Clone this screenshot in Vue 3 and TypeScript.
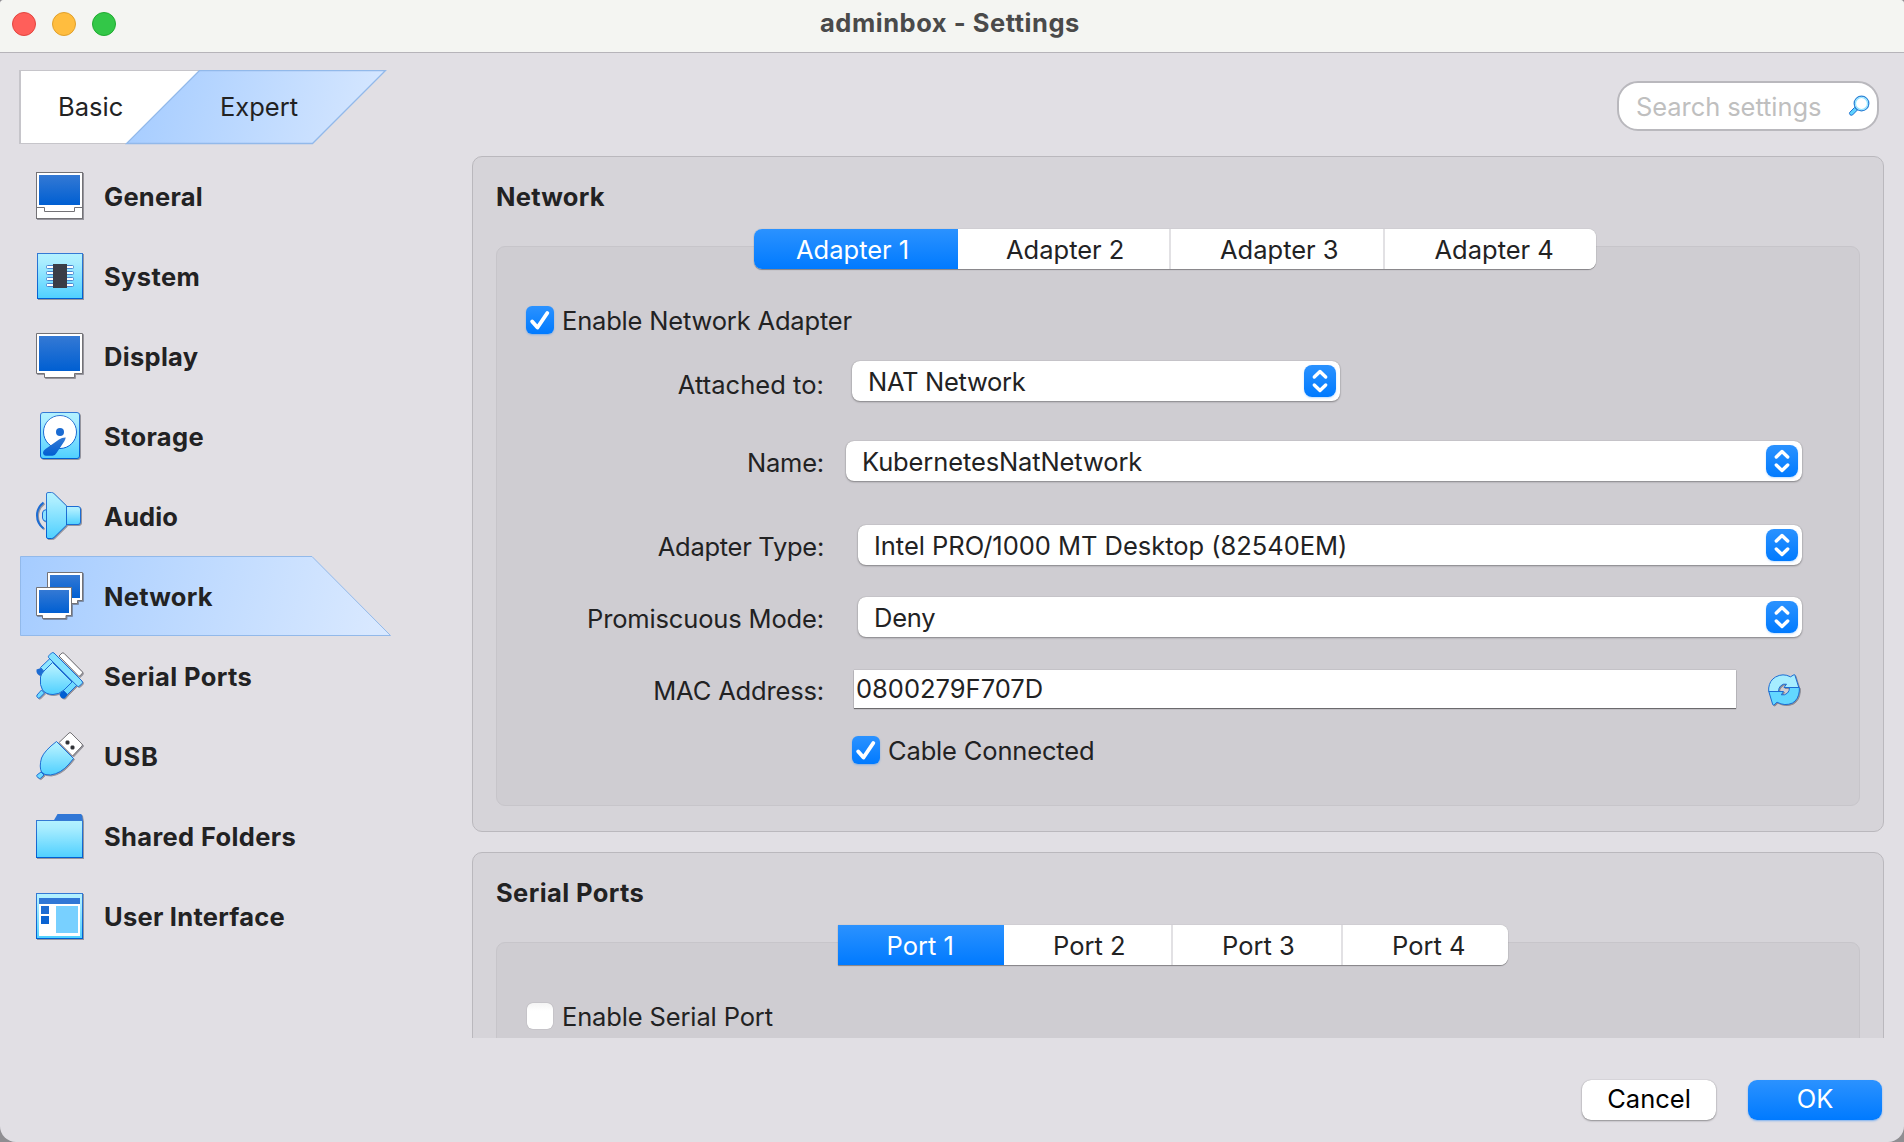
<script setup lang="ts">
import { ref } from 'vue'

interface NavItem {
  id: string
  label: string
  spacing: number
}

const navItems: NavItem[] = [
  { id: 'general', label: 'General', spacing: 0.25 },
  { id: 'system', label: 'System', spacing: 0.4 },
  { id: 'display', label: 'Display', spacing: 0.3 },
  { id: 'storage', label: 'Storage', spacing: 0.35 },
  { id: 'audio', label: 'Audio', spacing: 0.1 },
  { id: 'network', label: 'Network', spacing: 0.26 },
  { id: 'serial', label: 'Serial Ports', spacing: 0.4 },
  { id: 'usb', label: 'USB', spacing: 0.8 },
  { id: 'folders', label: 'Shared Folders', spacing: 0.35 },
  { id: 'ui', label: 'User Interface', spacing: 0.26 },
]

const current = ref('network')
const adapters = ['Adapter 1', 'Adapter 2', 'Adapter 3', 'Adapter 4']
const adapter = ref(0)
const ports = ['Port 1', 'Port 2', 'Port 3', 'Port 4']
const port = ref(0)
</script>

<template>
  <div class="window">
    <svg class="defs" width="0" height="0" aria-hidden="true">
      <defs>
        <linearGradient id="screen" x1="0" y1="0" x2="0" y2="1">
          <stop offset="0" stop-color="#3479d4" />
          <stop offset="1" stop-color="#005fd2" />
        </linearGradient>
        <linearGradient id="cyan" x1="0" y1="0" x2="0" y2="1">
          <stop offset="0" stop-color="#b4f2ff" />
          <stop offset=".2" stop-color="#a9edff" />
          <stop offset="1" stop-color="#4fd0ff" />
        </linearGradient>
        <linearGradient id="pale" gradientUnits="userSpaceOnUse" x1="0" y1="0" x2="350" y2="80">
          <stop offset="0" stop-color="#a5ccff" />
          <stop offset="1" stop-color="#d8e8ff" />
        </linearGradient>
        <linearGradient id="pale-mode" gradientUnits="userSpaceOnUse" x1="107" y1="20" x2="366" y2="80">
          <stop offset="0" stop-color="#a5ccff" />
          <stop offset="1" stop-color="#d8e8ff" />
        </linearGradient>
      </defs>
    </svg>

    <header class="titlebar">
      <div class="lights">
        <span class="light red"></span>
        <span class="light yellow"></span>
        <span class="light green"></span>
      </div>
      <h1 class="title">adminbox - Settings</h1>
    </header>

    <div class="toolbar">
      <div class="modes">
        <svg class="modes-shape" width="370" height="76" viewBox="0 0 370 76">
          <path d="M1 .5H182L108 73.5H1z" fill="#fff" stroke="#c6c5ca" />
          <path d="M1 0V74" stroke="#c6c5ca" stroke-width="2" />
          <path d="M180.500 .5H366.500L293.500 73.500H107.500z" fill="url(#pale-mode)" stroke="#92b9ea" stroke-width="1.300" />
        </svg>
        <span class="mode basic">Basic</span>
        <span class="mode expert">Expert</span>
      </div>
      <div class="search">
        <span class="placeholder">Search settings</span>
        <svg width="24" height="24" viewBox="0 0 24 24">
          <path d="M7.500 13.500L2.800 18.300Q2 19.500 3 20.700Q4.300 21.800 5.600 20.900L10.400 16z" fill="#5fd3ff" stroke="#1f6fd0" />
          <circle cx="14.500" cy="9.500" r="7.300" fill="#eefaff" stroke="#2f86d8" stroke-width="1.300" />
          <circle cx="14.500" cy="9.500" r="6" fill="#fff" stroke="#8fe2ff" stroke-width="1.200" />
        </svg>
      </div>
    </div>

    <div class="body">
      <nav class="nav">
        <div
          v-for="item in navItems"
          :key="item.id"
          class="nav-item"
          :class="{ active: item.id === current }"
          @click="current = item.id"
        >
          <svg v-if="item.id === current" class="nav-bg" width="373" height="80" viewBox="0 0 373 80">
            <path d="M.5 .5H292L370.500 79.500H.5z" fill="url(#pale)" stroke="#92b9ea" />
          </svg>
          <svg class="icon" width="48" height="48" viewBox="0 0 48 48">
            <g v-if="item.id === 'general'">
              <rect x=".5" y=".5" width="46" height="46" fill="#fff" stroke="#737276" />
              <rect x="3" y="3" width="41" height="30" fill="url(#screen)" />
              <path d="M.5 35.500H8.500V39.500H38.500V35.500H46.500" fill="none" stroke="#737276" />
            </g>
            <g v-else-if="item.id === 'system'">
              <rect x="1.500" y="1.500" width="45" height="45" fill="url(#cyan)" stroke="url(#screen)" />
              <rect v-for="n in 4" :key="n" x="10.500" :y="7.5 + n * 6" width="27" height="3" rx="1" fill="#fff" stroke="#4b86cf" />
              <rect x="17" y="12" width="14" height="24" fill="#3a3d47" />
            </g>
            <g v-else-if="item.id === 'display'">
              <path d="M.5 1.500H46.500V41.500H38.500V45.500H8.500V41.500H.5z" fill="#fff" stroke="#737276" />
              <rect x="3" y="4" width="41" height="35" fill="url(#screen)" />
            </g>
            <g v-else-if="item.id === 'storage'">
              <rect x="4.500" y=".5" width="39" height="46" rx="2.500" fill="url(#cyan)" stroke="url(#screen)" />
              <circle cx="24" cy="20" r="16.500" fill="#fff" stroke="url(#screen)" />
              <circle cx="24" cy="20" r="4" fill="#1a6bd2" />
              <path d="M29.700 25.600Q29.500 27.500 28.500 29L20.500 41Q19 43.800 16.500 43.800H10Q7 43.500 7 40.500Q7 38.500 9.500 37L23 27.500Q26 25.500 29.700 25.600z" fill="url(#screen)" />
            </g>
            <g v-else-if="item.id === 'audio'">
              <path d="M7.500 10.500Q1 15.500 1 23.500T7.500 36.500" fill="none" stroke="#1c6cd3" stroke-width="2" />
              <path d="M10.500 17.500Q6.500 18 6.500 21V26Q6.500 29 10.500 29.500z" fill="#8ce2ff" stroke="#1c6cd3" />
              <rect x="28.500" y="14.500" width="16" height="18" rx="2.500" fill="url(#cyan)" stroke="#1c6cd3" />
              <path d="M10.500 2Q10.500 .5 12 .5H15.500Q17 .5 18 1.600L30.500 13.800V33.200L18 45.500Q17 46.500 15.500 46.500H12Q10.500 46.500 10.500 45z" fill="url(#cyan)" stroke="url(#screen)" />
            </g>
            <g v-else-if="item.id === 'network'">
              <path d="M11.500 .5H46.500V28.500H41.500V31.500H17V28.500H11.500z" fill="#fff" stroke="#737276" />
              <rect x="14" y="3" width="30" height="23" fill="url(#screen)" />
              <path d="M.5 15.500H35.500V43.500H30V46.500H6.500V43.500H.5z" fill="#fff" stroke="#737276" />
              <rect x="3" y="18" width="30" height="23" fill="url(#screen)" />
            </g>
            <g v-else-if="item.id === 'serial'">
              <path d="M23 4L26 1Q27 .5 28 1.300L46 19.500Q47 20.500 46 21.800L43 24.500z" fill="#fff" stroke="#737276" />
              <path d="M.5 17.500L5 16L8.500 20.500L6.500 23.500Q4 24.500 1.500 22Q0 20 .5 17.500z" fill="#1c6cd3" />
              <path d="M4.500 15.500L14.500 6L18.500 10.500L8.500 20z" fill="#8ee6ff" stroke="#1c6cd3" />
              <path d="M25 40L28 38.500L32 42.500L29 46Q27 47.300 25 45.500L23.500 43z" fill="#005fd2" />
              <path d="M27.500 38.500L37 28.500L41.500 32.500L31.500 42.500z" fill="#6edaff" stroke="#1c6cd3" />
              <path d="M16.500 10.500L36 30L28 38Q23 42.500 17 42.500Q10 42.500 6.500 38Q3.500 33.500 4.500 25Q5 22 8 19z" fill="url(#cyan)" stroke="#1c6cd3" />
              <path d="M12.500 5.500Q12 4.500 13 3.500L15.500 1Q16.800 0 18 1L46 29Q47 30.500 46 31.500L43.500 34Q42.500 35 41.200 34z" fill="#85e2ff" stroke="#1c6cd3" />
              <path d="M5.500 38L8.500 41L3.500 46Q2.500 46.500 1.500 45.500Q.3 44.500 1 43z" fill="#6edaff" stroke="#1c6cd3" />
            </g>
            <g v-else-if="item.id === 'usb'">
              <path d="M23 10.500L33 1Q34 0 35 1L46 12Q47 13 46 14L36.500 24z" fill="#fff" stroke="#737276" />
              <path d="M31.500 8.500v4M29.500 10.500h4M36.500 13.500v4M34.500 15.500h4" stroke="#2f3035" stroke-width="2.600" />
              <path d="M20.500 9.500L37.500 26.500L33 32Q25 41.500 14.500 43Q8 43.500 5.500 40Q3 35 5.500 26Q8.500 18.500 20.500 9.500z" fill="url(#cyan)" stroke="#1c6cd3" />
              <path d="M5 40L8 43L4.500 46.300Q3.500 47 2.500 46L1 44.500Q.3 43.700 1.200 42.800z" fill="#6edaff" stroke="#1c6cd3" />
            </g>
            <g v-else-if="item.id === 'folders'">
              <path d="M17.500 9L21.500 2H45L46 3L47 9z" fill="#3077d6" />
              <rect x=".5" y="8.500" width="46" height="37" fill="url(#cyan)" stroke="url(#screen)" />
            </g>
            <g v-else>
              <rect x=".5" y="1.500" width="46" height="45" fill="url(#cyan)" stroke="url(#screen)" />
              <rect x="3" y="6" width="41" height="6" fill="#3077d6" />
              <rect x="3" y="12" width="41" height="32" fill="#fff" />
              <rect x="5" y="14" width="8" height="8" fill="#1d6cd3" />
              <rect x="5" y="24" width="8" height="8" fill="#0a63d2" />
              <rect x="20" y="14" width="22" height="27" fill="#78d0ff" />
            </g>
          </svg>
          <span class="nav-label" :style="{ letterSpacing: item.spacing + 'px' }">{{ item.label }}</span>
        </div>
      </nav>

      <main class="pages">
        <section class="panel">
          <h2 class="panel-title">Network</h2>
          <div class="frame network">
            <div class="tabs adapters">
              <button v-for="(name, i) in adapters" :key="name" class="tab" :class="{ on: i === adapter }" @click="adapter = i">{{ name }}</button>
            </div>
            <label class="check-row enable">
              <span class="check checked"><svg width="28" height="28" viewBox="0 0 28 28"><path d="M6.200 15.500L11.500 21.500L21.300 7" /></svg></span>
              <span class="check-text t-enable">Enable Network Adapter</span>
            </label>
            <div class="row attached">
              <span class="label">Attached to:</span>
              <div class="combo"><span class="value t-nat">NAT Network</span><i class="arrows"><svg width="32" height="32" viewBox="0 0 32 32"><path d="M10.300 12L16 6.500L21.700 12M10.300 20L16 25.500L21.700 20" /></svg></i></div>
            </div>
            <div class="row name">
              <span class="label">Name:</span>
              <div class="combo"><span class="value t-kube">KubernetesNatNetwork</span><i class="arrows"><svg width="32" height="32" viewBox="0 0 32 32"><path d="M10.300 12L16 6.500L21.700 12M10.300 20L16 25.500L21.700 20" /></svg></i></div>
            </div>
            <div class="row type">
              <span class="label">Adapter Type:</span>
              <div class="combo"><span class="value t-intel">Intel PRO/1000 MT Desktop (82540EM)</span><i class="arrows"><svg width="32" height="32" viewBox="0 0 32 32"><path d="M10.300 12L16 6.500L21.700 12M10.300 20L16 25.500L21.700 20" /></svg></i></div>
            </div>
            <div class="row promisc">
              <span class="label">Promiscuous Mode:</span>
              <div class="combo"><span class="value t-deny">Deny</span><i class="arrows"><svg width="32" height="32" viewBox="0 0 32 32"><path d="M10.300 12L16 6.500L21.700 12M10.300 20L16 25.500L21.700 20" /></svg></i></div>
            </div>
            <div class="row mac">
              <span class="label">MAC Address:</span>
              <div class="field">0800279F707D</div>
              <svg class="refresh" width="32" height="32" viewBox="0 0 32 32">
                <path d="M.7 17.500V14Q1.500 6.500 7.500 3Q15 -1.200 22.500 2.800L26 .7Q27 .5 27 1.500L30.800 13.500H16L18.500 10.200Q15 9.400 12.500 12Q10.500 14 10.500 17.500z" fill="#a6edff" stroke="#1c6cd3" />
                <path d="M31.300 13.500V17Q30.500 25.500 24.500 29Q17 32.500 9 28.200L6 31Q5 31.300 4.700 30.500L.8 17.500H15.500L13.300 20.800Q17 21.600 19.500 19Q21.500 17 21.500 13.500z" fill="#63d7ff" stroke="#1c6cd3" />
              </svg>
            </div>
            <label class="check-row cable">
              <span class="check checked"><svg width="28" height="28" viewBox="0 0 28 28"><path d="M6.200 15.500L11.500 21.500L21.300 7" /></svg></span>
              <span class="check-text t-cable">Cable Connected</span>
            </label>
          </div>
        </section>

        <section class="panel second">
          <h2 class="panel-title serial-title">Serial Ports</h2>
          <div class="frame serial">
            <div class="tabs ports">
              <button v-for="(name, i) in ports" :key="name" class="tab" :class="{ on: i === port }" @click="port = i">{{ name }}</button>
            </div>
            <label class="check-row enable">
              <span class="check empty"></span>
              <span class="check-text t-serial">Enable Serial Port</span>
            </label>
          </div>
        </section>
      </main>
    </div>

    <footer class="footer">
      <button class="btn cancel">Cancel</button>
      <button class="btn ok">OK</button>
    </footer>
  </div>
</template>

<style>
body {
  margin: 0;
  background: #8f8e92;
}
</style>

<style scoped>
.window {
  width: 1904px;
  height: 1142px;
  box-sizing: border-box;
  display: flex;
  flex-direction: column;
  overflow: hidden;
  background: #e1dfe4;
  border-radius: 4px 4px 16px 16px;
  font-family: Inter, "Liberation Sans", sans-serif;
  font-size: 25.5px;
  line-height: 32px;
  letter-spacing: 0;
  color: #222223;
  white-space: nowrap;
}
.defs { position: absolute; }
svg { display: block; flex: none; }
button {
  font: inherit;
  letter-spacing: inherit;
  color: inherit;
  border: 0;
  margin: 0;
  padding: 0;
}

.titlebar {
  flex: none;
  display: flex;
  height: 52px;
  background: #f4f5f2;
  border-bottom: 1px solid #b6b4b9;
}
.lights {
  display: flex;
  gap: 16px;
  padding: 12px 0 0 12px;
  width: 808px;
  box-sizing: border-box;
}
.light {
  width: 24px;
  height: 24px;
  box-sizing: border-box;
  border-radius: 50%;
  border: 1px solid;
}
.red { background: #ff5f5a; border-color: #e2453f; }
.yellow { background: #ffbd3f; border-color: #e0a02c; }
.green { background: #33c748; border-color: #20ab31; }
.title {
  margin: 7px 0 0 12px;
  font-size: 25.5px;
  font-weight: 700;
  letter-spacing: 0.53px;
  color: #4a4a4a;
}

.toolbar {
  flex: none;
  display: flex;
  justify-content: space-between;
  height: 103px;
  padding: 17px 25px 0 19px;
  box-sizing: border-box;
}
.modes {
  position: relative;
  display: flex;
  width: 370px;
  height: 76px;
}
.modes-shape { position: absolute; left: 0; top: 0; }
.mode { position: relative; padding-top: 21px; }
.basic { width: 162px; padding-left: 39px; }
.basic, .expert { box-sizing: border-box; }
.expert { padding-left: 39px; }
.search {
  display: flex;
  justify-content: space-between;
  align-items: center;
  width: 262px;
  height: 50px;
  margin-top: 11px;
  padding: 0 6px 0 17px;
  box-sizing: border-box;
  border: 2px solid #b9b8bd;
  border-radius: 21px;
  background: #fff;
}
.placeholder { color: #bfbfbf; padding-top: 2px; letter-spacing: -0.08px; }

.body {
  flex: none;
  display: flex;
  height: 882px;
}
.nav {
  flex: none;
  width: 452px;
  padding-left: 20px;
}
.nav-item {
  position: relative;
  display: flex;
  height: 80px;
  width: 373px;
}
.nav-bg { position: absolute; left: 0; top: 0; }
.icon {
  position: relative;
  margin: 16px 0 0 16px;
  filter: drop-shadow(1px 1px 0.300px rgba(60, 60, 70, 0.450));
}
.nav-label {
  position: relative;
  margin: 25px 0 0 20px;
  font-weight: 700;
}

.pages {
  width: 1412px;
  height: 882px;
  overflow: hidden;
}
.panel {
  box-sizing: border-box;
  height: 676px;
  padding: 24px 23px 0;
  border: 1px solid #bab8bd;
  border-radius: 10px;
  background: #d6d4d9;
}
.second { margin-top: 20px; }
.panel-title {
  margin: 0;
  height: 65px;
  font-size: 25.5px;
  font-weight: 700;
  letter-spacing: 0.26px;
}
.serial-title { letter-spacing: 0.4px; }
.frame {
  display: flex;
  flex-direction: column;
  height: 560px;
  box-sizing: border-box;
  border: 1px solid #c7c5ca;
  border-radius: 9px;
  background: #cfcdd2;
}
.tabs {
  display: flex;
  height: 40px;
  margin-top: -18px;
  border-radius: 8px;
  background: #fff;
  box-shadow: 0 1px 1px rgba(0, 0, 0, 0.350), 0 0 1px rgba(0, 0, 0, 0.300);
  overflow: hidden;
}
.adapters { width: 842px; margin-left: 257px; }
.ports { width: 670px; margin-left: 341px; border-radius: 0 8px 8px 0; }
.tab {
  box-sizing: border-box;
  text-align: left;
  padding-top: 2px;
  background: #fff;
  border-right: 2px solid #e2e1e4;
}
.tab:last-child { border-right: 0; }
.tab.on {
  color: #fff;
  border-right: 0;
  background: linear-gradient(#2b92ff, #007aff);
}
.adapters .tab:nth-child(1) { width: 204px; padding-left: 42px; }
.adapters .tab:nth-child(2) { width: 213px; padding-left: 48px; }
.adapters .tab:nth-child(3) { width: 214px; padding-left: 49px; }
.adapters .tab:nth-child(4) { width: 211px; padding-left: 49.5px; }
.ports .tab:nth-child(1) { width: 166px; padding-left: 48.5px; }
.ports .tab:nth-child(2) { width: 169px; padding-left: 49px; }
.ports .tab:nth-child(3) { width: 170px; padding-left: 49px; }
.ports .tab:nth-child(4) { width: 165px; padding-left: 49px; }

.check-row {
  display: flex;
  align-items: center;
  gap: 8px;
  height: 28px;
}
.check-text { padding-top: 2px; }
.t-enable { letter-spacing: -0.18px; }
.t-cable { letter-spacing: -0.16px; }
.t-serial { letter-spacing: -0.14px; }
.enable { margin: 37px 0 0 29px; }
.check {
  width: 28px;
  height: 28px;
  border-radius: 6px;
  box-sizing: border-box;
}
.checked {
  background: linear-gradient(#2b92ff, #007aff);
  box-shadow: 0 1px 2px rgba(0, 122, 255, 0.350);
}
.checked path {
  fill: none;
  stroke: #fff;
  stroke-width: 3.900;
  stroke-linecap: round;
  stroke-linejoin: round;
}
.empty {
  width: 26px;
  height: 26px;
  margin: 0 1px;
  background: linear-gradient(#f4f4f4, #fff 30%);
  box-shadow: 0 0 1px rgba(0, 0, 0, 0.400);
}

.row { display: flex; height: 40px; }
.label {
  width: 327px;
  text-align: right;
  flex: none;
}
.combo {
  display: flex;
  justify-content: space-between;
  align-items: center;
  box-sizing: border-box;
  height: 40px;
  padding: 0 4px 0 16px;
  border-radius: 8px;
  background: #fff;
  box-shadow: 0 1px 2px rgba(0, 0, 0, 0.350), 0 0 1px rgba(0, 0, 0, 0.300);
}
.value { padding-top: 2px; }
.t-nat { letter-spacing: -0.3px; }
.t-kube { letter-spacing: -0.12px; }
.t-intel { letter-spacing: -0.03px; }
.t-deny { letter-spacing: -0.2px; }
.arrows {
  width: 32px;
  height: 32px;
  border-radius: 8px;
  background: linear-gradient(#2b92ff, #007aff);
  box-shadow: 0 1px 2px rgba(0, 122, 255, 0.250);
}
.arrows path {
  fill: none;
  stroke: #fff;
  stroke-width: 3.400;
  stroke-linecap: round;
  stroke-linejoin: round;
}
.attached { margin-top: 27px; }
.attached .label { padding-top: 8px; letter-spacing: 0.05px; }
.attached .combo { margin-left: 28px; width: 488px; }
.name { margin-top: 40px; }
.name .label { padding-top: 6px; letter-spacing: -0.2px; }
.name .combo { margin-left: 22px; width: 956px; }
.type { margin-top: 44px; }
.type .label { padding-top: 6px; letter-spacing: -0.28px; }
.type .combo, .promisc .combo { margin-left: 34px; width: 944px; }
.promisc { margin-top: 32px; }
.promisc .label { padding-top: 6px; letter-spacing: -0.15px; }
.mac { margin-top: 33px; height: 38px; }
.mac .label { padding-top: 5px; letter-spacing: -0.16px; }
.field {
  margin-left: 30px;
  width: 882px;
  height: 38px;
  line-height: 38px;
  padding-left: 2px;
  box-sizing: border-box;
  background: #fff;
  box-shadow: 0 1px 1px rgba(0, 0, 0, 0.450), 0 0 1px rgba(0, 0, 0, 0.300);
}
.refresh { margin: 4px 0 0 32px; filter: drop-shadow(1px 1px 0.300px rgba(60, 60, 70, 0.450)); }
.cable { margin: 28px 0 0 355px; }

.footer {
  flex: none;
  display: flex;
  justify-content: flex-end;
  gap: 32px;
  padding: 42px 22px 0 0;
}
.btn {
  width: 134px;
  height: 40px;
  padding-bottom: 2px;
  border-radius: 9px;
}
.cancel {
  color: #000;
  background: #fff;
  box-shadow: 0 1px 2px rgba(0, 0, 0, 0.350), 0 0 1px rgba(0, 0, 0, 0.300);
}
.ok {
  color: #fff;
  background: linear-gradient(#2b92ff, #007aff);
  box-shadow: 0 1px 2px rgba(0, 122, 255, 0.450);
}
</style>
